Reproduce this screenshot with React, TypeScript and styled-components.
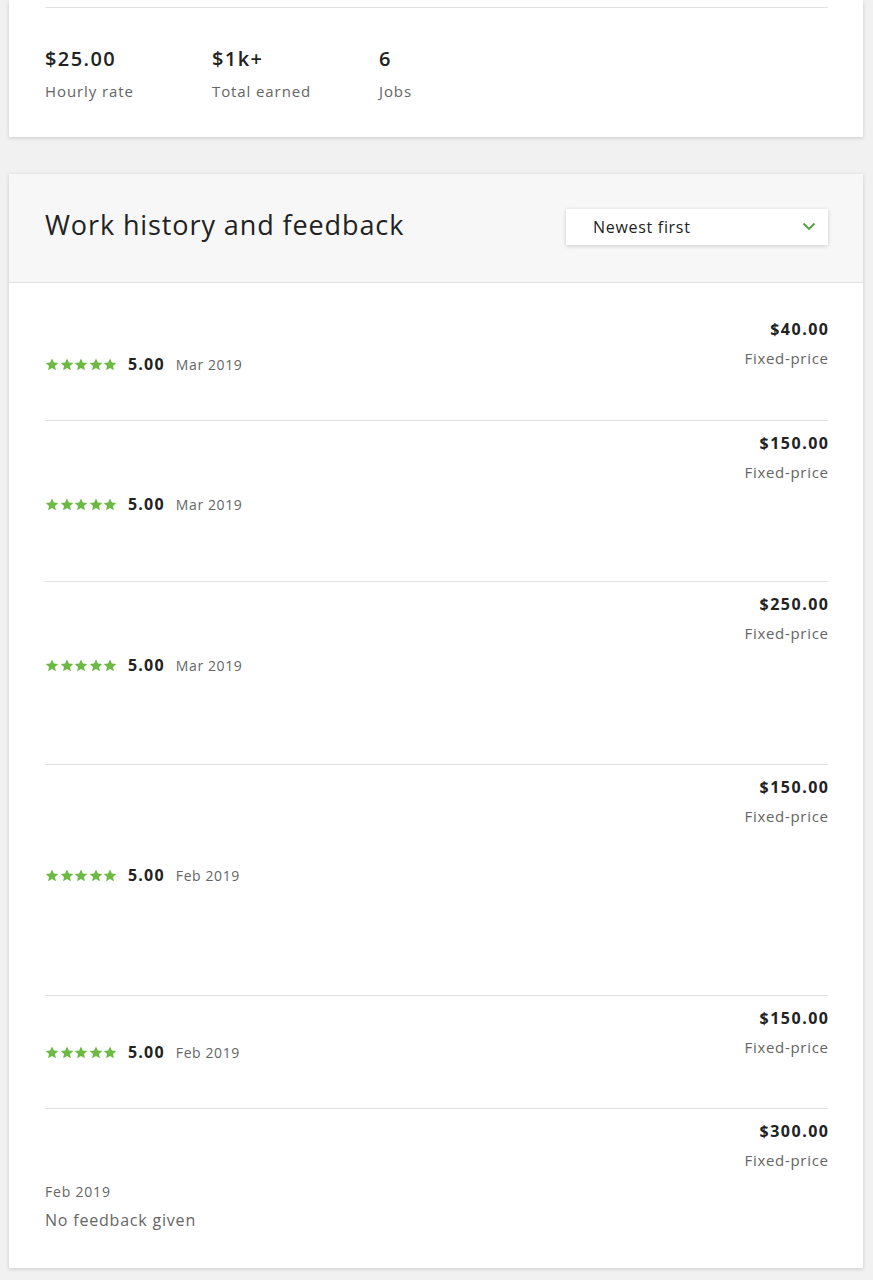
import React from 'react';
import styled, { createGlobalStyle } from 'styled-components';

const GlobalStyle = createGlobalStyle`
  html, body {
    margin: 0;
    padding: 0;
    background: #f1f1f1;
    font-family: 'Open Sans', 'Liberation Sans', sans-serif;
    color: #222222;
  }
`;

const Page = styled.div`
  display: flex;
  flex-direction: column;
  gap: 37px;
  padding: 0 10px 12px 9px;
`;

const Card = styled.section`
  background: #ffffff;
  box-shadow: 0 1px 4px rgba(0, 0, 0, 0.16);
`;

const StatsBody = styled.div`
  padding: 7px 35px 0 36px;
  height: 130px;
`;

const Rule = styled.hr`
  margin: 0;
  border: 0;
  border-top: 1px solid #e2e2e2;
`;

const Stats = styled.div`
  display: flex;
  padding-top: 38px;
`;

const Stat = styled.div`
  width: 167px;
  display: flex;
  flex-direction: column;
  gap: 9px;
`;

const StatValue = styled.div`
  font-size: 20px;
  font-weight: 600;
  line-height: 26px;
  letter-spacing: 1.4px;
`;

const StatLabel = styled.div`
  font-size: 15px;
  line-height: 20px;
  color: #656565;
  letter-spacing: 0.9px;
`;

const Header = styled.header`
  display: flex;
  align-items: center;
  justify-content: space-between;
  height: 108px;
  padding: 0 35px 0 36px;
  background: #f7f7f7;
  border-bottom: 1px solid #e2e2e2;
`;

const Title = styled.h2`
  margin: 0 0 8px;
  font-size: 27px;
  font-weight: 400;
  letter-spacing: 0.9px;
`;

const Select = styled.div`
  width: 262px;
  height: 36px;
  box-sizing: border-box;
  display: flex;
  align-items: center;
  justify-content: space-between;
  padding: 0 12px 1px 27px;
  background: #ffffff;
  box-shadow: 0 1px 4px rgba(0, 0, 0, 0.18);
  font-size: 16px;
  letter-spacing: 0.7px;
  margin-bottom: 2px;
`;

const List = styled.div`
  padding: 0 35px 0 36px;
`;

const Row = styled.div<{ $height: number; $top: number }>`
  display: flex;
  justify-content: space-between;
  align-items: flex-start;
  box-sizing: border-box;
  height: ${(p) => p.$height}px;
  padding-top: ${(p) => p.$top}px;
  & + & {
    border-top: 1px solid #e2e2e2;
  }
`;

const Meta = styled.div<{ $offset: number }>`
  padding-top: ${(p) => p.$offset}px;
`;

const RatingLine = styled.div`
  display: flex;
  align-items: center;
  height: 20px;
`;

const Stars = styled.div`
  display: flex;
  gap: 0.5px;
  margin-right: 11px;
`;

const Score = styled.span`
  font-size: 16px;
  font-weight: 700;
  letter-spacing: 1.2px;
  margin-right: 11px;
`;

const DateText = styled.span`
  font-size: 14px;
  color: #656565;
  letter-spacing: 0.6px;
`;

const Plain = styled.div<{ $size: number }>`
  font-size: ${(p) => p.$size}px;
  line-height: 20px;
  color: #656565;
  letter-spacing: 0.8px;
  & + & {
    margin-top: 8px;
  }
`;

const Price = styled.div`
  text-align: right;
`;

const Amount = styled.div`
  font-size: 16px;
  font-weight: 700;
  line-height: 20px;
  letter-spacing: 1.5px;
  margin-right: -1.5px;
`;

const PriceType = styled.div`
  font-size: 15px;
  line-height: 20px;
  color: #656565;
  letter-spacing: 0.7px;
  margin-right: -0.7px;
  margin-top: 9px;
`;

const Star = () => (
  <svg width="14" height="13" viewBox="0 0 24 23">
    <path
      d="M12 0.8l3.3 7.1 7.8 0.9-5.8 5.3 1.6 7.7L12 17.9l-6.9 3.9 1.6-7.7L0.9 8.8l7.8-0.9z"
      fill="#6cb944"
    />
  </svg>
);

const Chevron = () => (
  <svg width="14" height="9" viewBox="0 0 14 9">
    <polyline points="1.5,1.5 7,7 12.5,1.5" fill="none" stroke="#4ea03a" strokeWidth="1.8" />
  </svg>
);

type Job = {
  amount: string;
  date: string;
  rating?: string;
  height: number;
  top: number;
  offset: number;
};

const jobs: Job[] = [
  { amount: '$40.00', date: 'Mar 2019', rating: '5.00', height: 137, top: 36, offset: 35 },
  { amount: '$150.00', date: 'Mar 2019', rating: '5.00', height: 161, top: 12, offset: 61 },
  { amount: '$250.00', date: 'Mar 2019', rating: '5.00', height: 183, top: 12, offset: 61 },
  { amount: '$150.00', date: 'Feb 2019', rating: '5.00', height: 231, top: 12, offset: 88 },
  { amount: '$150.00', date: 'Feb 2019', rating: '5.00', height: 113, top: 12, offset: 34 },
  { amount: '$300.00', date: 'Feb 2019', height: 160, top: 12, offset: 61 },
];

export default function App() {
  return (
    <>
      <GlobalStyle />
      <Page>
        <Card>
          <StatsBody>
            <Rule />
            <Stats>
              <Stat>
                <StatValue>$25.00</StatValue>
                <StatLabel>Hourly rate</StatLabel>
              </Stat>
              <Stat>
                <StatValue>$1k+</StatValue>
                <StatLabel>Total earned</StatLabel>
              </Stat>
              <Stat>
                <StatValue>6</StatValue>
                <StatLabel>Jobs</StatLabel>
              </Stat>
            </Stats>
          </StatsBody>
        </Card>

        <Card>
          <Header>
            <Title>Work history and feedback</Title>
            <Select>
              <span>Newest first</span>
              <Chevron />
            </Select>
          </Header>
          <List>
            {jobs.map((job, i) => (
              <Row key={i} $height={job.height} $top={job.top}>
                <Meta $offset={job.offset}>
                  {job.rating ? (
                    <RatingLine>
                      <Stars>
                        {[0, 1, 2, 3, 4].map((s) => (
                          <Star key={s} />
                        ))}
                      </Stars>
                      <Score>{job.rating}</Score>
                      <DateText>{job.date}</DateText>
                    </RatingLine>
                  ) : (
                    <>
                      <Plain $size={14}>{job.date}</Plain>
                      <Plain $size={16}>No feedback given</Plain>
                    </>
                  )}
                </Meta>
                <Price>
                  <Amount>{job.amount}</Amount>
                  <PriceType>Fixed-price</PriceType>
                </Price>
              </Row>
            ))}
          </List>
        </Card>
      </Page>
    </>
  );
}
